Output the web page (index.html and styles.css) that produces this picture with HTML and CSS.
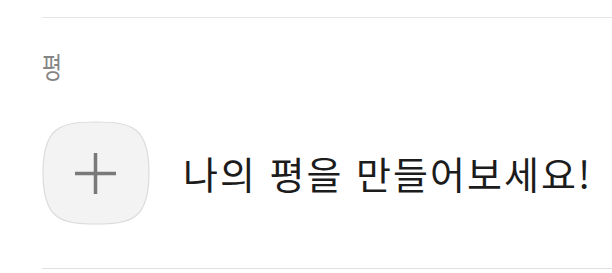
FILE: index.html
```html
<!DOCTYPE html>
<html lang="ko">
<head>
<meta charset="utf-8">
<link rel="stylesheet" href="styles.css">
</head>
<body>
<div class="section">
  <div class="label">평</div>
  <div class="row">
    <div class="add-btn">
      <svg class="squircle" viewBox="0 0 108 104" width="108" height="104">
        <path d="M54 1 C90 1 107 6 107 52 C107 98 90 103 54 103 C18 103 1 98 1 52 C1 6 18 1 54 1 Z" fill="#f3f3f3" stroke="#dcdcdc" stroke-width="1.2"/>
        <path d="M53.5 32 V73 M33 52.5 H74" stroke="#797979" stroke-width="3.5" fill="none"/>
      </svg>
    </div>
    <div class="prompt">나의 평을 만들어보세요!</div>
  </div>
</div>
</body>
</html>
```
FILE: styles.css
```css
html, body {
  margin: 0;
  padding: 0;
  background: #ffffff;
}
body {
  font-family: "Noto Sans CJK KR", "Noto Sans", sans-serif;
  width: 612px;
  height: 273px;
  overflow: hidden;
}
.section {
  margin-left: 42px;
  margin-top: 17px;
  border-top: 1.5px solid #e6e6e6;
  border-bottom: 1.5px solid #e0e0e0;
  height: 252px;
  box-sizing: border-box;
}
.label {
  margin-top: 33px;
  font-size: 29px;
  line-height: 30px;
  height: 30px;
  color: #858585;
  transform: scaleX(0.75);
  transform-origin: left center;
}
.row {
  display: flex;
  align-items: center;
  margin-top: 40px;
}
.add-btn {
  width: 108px;
  height: 104px;
  flex: none;
}
.squircle {
  display: block;
}
.prompt {
  margin-left: 33px;
  font-size: 38px;
  color: #1c1c1c;
  line-height: 1;
  letter-spacing: 2px;
}
```
